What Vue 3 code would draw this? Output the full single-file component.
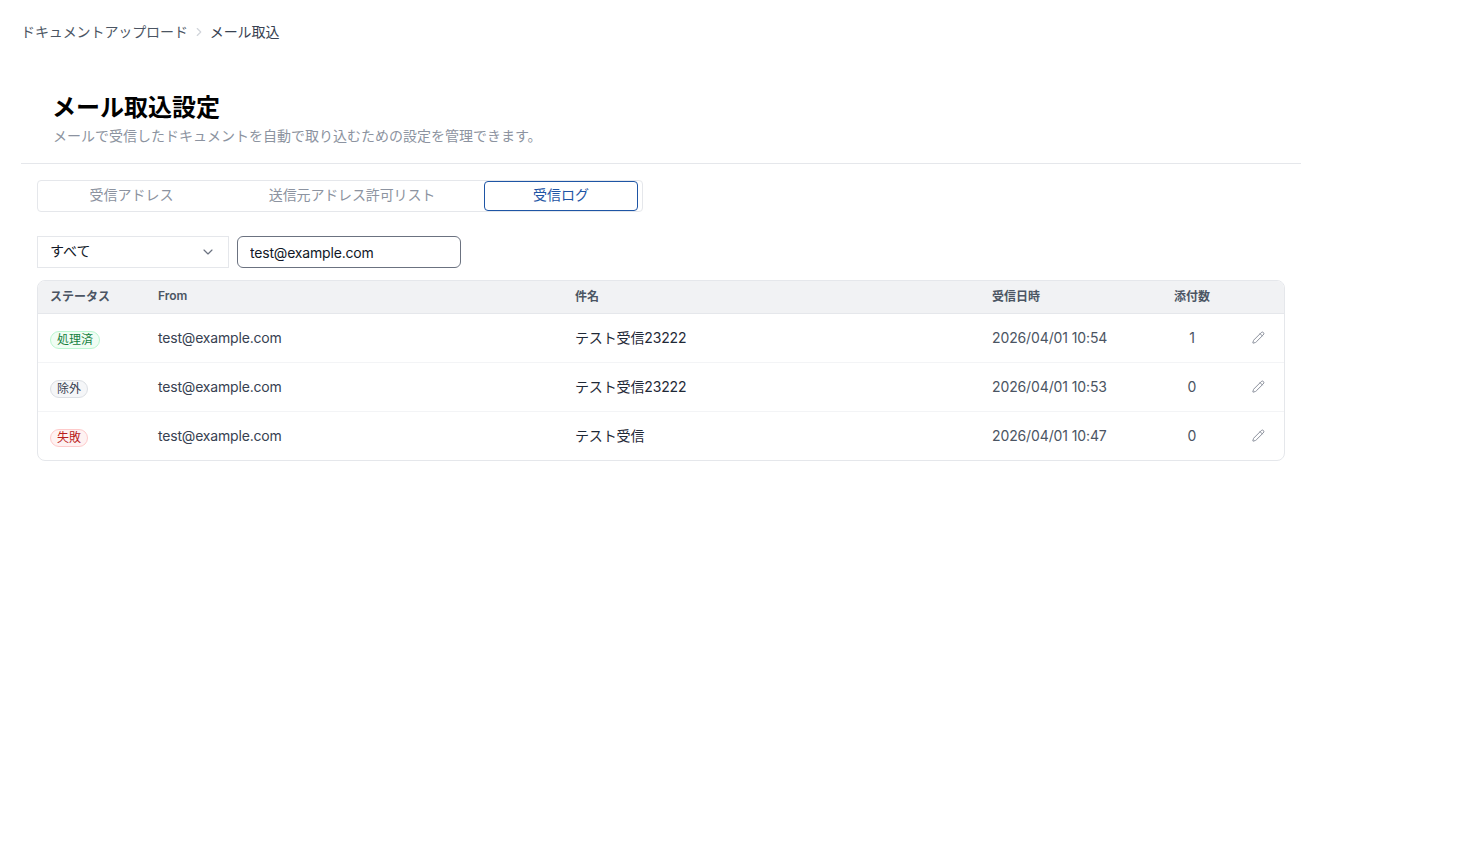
<script setup>
const logs = [
  { status: '処理済', type: 'done', from: 'test@example.com', subject: 'テスト受信23222', date: '2026/04/01 10:54', count: 1 },
  { status: '除外', type: 'skip', from: 'test@example.com', subject: 'テスト受信23222', date: '2026/04/01 10:53', count: 0 },
  { status: '失敗', type: 'fail', from: 'test@example.com', subject: 'テスト受信', date: '2026/04/01 10:47', count: 0 }
];
</script>

<template>
  <div class="page">
    <nav class="breadcrumb">
      <span class="crumb">ドキュメントアップロード</span>
      <svg class="crumb-sep" width="14" height="14" viewBox="0 0 24 24" fill="none" stroke="currentColor" stroke-width="2" stroke-linecap="round" stroke-linejoin="round">
        <path d="m9 18 6-6-6-6" />
      </svg>
      <span class="crumb current">メール取込</span>
    </nav>

    <header class="head">
      <h1>メール取込設定</h1>
      <p>メールで受信したドキュメントを自動で取り込むための設定を管理できます。</p>
    </header>

    <div class="body">
      <div class="tabs">
        <button class="tab tab-a">受信アドレス</button>
        <button class="tab tab-b">送信元アドレス許可リスト</button>
        <button class="tab tab-c active">受信ログ</button>
      </div>

      <div class="filters">
        <div class="select">
          <span>すべて</span>
          <svg width="16" height="16" viewBox="0 0 24 24" fill="none" stroke="currentColor" stroke-width="1.75" stroke-linecap="round" stroke-linejoin="round">
            <path d="m6 9 6 6 6-6" />
          </svg>
        </div>
        <input class="search" type="text" value="test@example.com" />
      </div>

      <div class="table-wrap">
        <table>
          <thead>
            <tr>
              <th class="c-status">ステータス</th>
              <th class="c-from">From</th>
              <th class="c-subject">件名</th>
              <th class="c-date">受信日時</th>
              <th class="c-count">添付数</th>
              <th class="c-edit"></th>
            </tr>
          </thead>
          <tbody>
            <tr v-for="(row, index) in logs" :key="index">
              <td><span class="badge" :class="row.type">{{ row.status }}</span></td>
              <td class="from">{{ row.from }}</td>
              <td class="subject">{{ row.subject }}</td>
              <td class="date">{{ row.date }}</td>
              <td class="count">{{ row.count }}</td>
              <td class="edit">
                <svg width="13" height="13" viewBox="0 0 24 24" fill="none" stroke="currentColor" stroke-width="1.75" stroke-linecap="round" stroke-linejoin="round">
                  <path d="M21.17 6.81a2.83 2.83 0 0 0-4-4L3.34 16.67a2 2 0 0 0-.5.83l-1.32 4.35a.5.5 0 0 0 .62.62l4.35-1.32a2 2 0 0 0 .83-.5z" />
                  <path d="m15 5 4 4" />
                </svg>
              </td>
            </tr>
          </tbody>
        </table>
      </div>
    </div>
  </div>
</template>

<style>
body {
  background: #fff;
}
</style>

<style scoped>
.page {
  width: 1280px;
  margin-left: 21px;
  font-family: Inter, "Noto Sans CJK JP", sans-serif;
  color: #111827;
}

.breadcrumb {
  display: flex;
  align-items: center;
  gap: 4px;
  height: 20px;
  padding-top: 22px;
  font-size: 14px;
  line-height: 20px;
}

.crumb {
  color: #4b5563;
  letter-spacing: -0.1px;
}

.crumb.current {
  color: #374151;
}

.crumb-sep {
  color: #d1d5db;
}

.head {
  margin-top: 50px;
  padding: 0 0 17px 32px;
  border-bottom: 1px solid #e5e7eb;
}

.head h1 {
  margin: 0 0 0 -1px;
  font-size: 24px;
  line-height: 32px;
  font-weight: 700;
  color: #000;
}

.head p {
  margin: 2px 0 0;
  font-size: 14px;
  line-height: 20px;
  color: #8c93a0;
}

.body {
  padding: 16px 16px 0;
}

.tabs {
  display: flex;
  align-items: center;
  width: 606px;
  height: 32px;
  box-sizing: border-box;
  padding: 0 3px 0 0;
  border: 1px solid #e5e7eb;
  border-radius: 4px;
}

.tab {
  height: 30px;
  padding: 0 0 4px;
  border: 1px solid transparent;
  border-radius: 4px;
  background: none;
  font-family: inherit;
  font-size: 14px;
  color: #8c93a0;
}

.tab-a {
  width: 187px;
}

.tab-b {
  width: 259px;
  padding-right: 5px;
  letter-spacing: -0.13px;
}

.tab-c {
  width: 154px;
}

.tab.active {
  border-color: #1e55a5;
  color: #1e55a5;
}

.filters {
  display: flex;
  gap: 8px;
  margin-top: 24px;
}

.select {
  display: flex;
  align-items: center;
  justify-content: space-between;
  box-sizing: border-box;
  width: 192px;
  height: 32px;
  padding: 0 12px;
  border: 1px solid #e5e7eb;
  font-size: 14px;
  color: #111827;
}

.select span {
  margin-bottom: 4px;
}

.select svg {
  color: #6b7280;
}

.search {
  box-sizing: border-box;
  width: 224px;
  height: 32px;
  padding: 0 12px;
  border: 1px solid #6b7280;
  border-radius: 6px;
  outline: none;
  font-family: inherit;
  font-size: 14px;
  letter-spacing: -0.18px;
  color: #111827;
}

.table-wrap {
  width: 1248px;
  box-sizing: border-box;
  margin-top: 12px;
  border: 1px solid #e5e7eb;
  border-radius: 8px;
  overflow: hidden;
}

table {
  width: 100%;
  border-collapse: collapse;
  table-layout: fixed;
}

th,
td {
  box-sizing: border-box;
}

th {
  height: 32px;
  padding: 0 12px 2px;
  background: #f1f2f4;
  border-bottom: 1px solid #e5e7eb;
  text-align: left;
  font-size: 12px;
  font-weight: 600;
  color: #4b5563;
}

td {
  height: 49px;
  padding: 0 12px 1px;
  border-bottom: 1px solid #f3f4f6;
  font-size: 14px;
}

tbody tr:last-child td {
  border-bottom: none;
}

.c-status {
  width: 108px;
}

.c-from,
.c-subject {
  width: 417px;
}

.c-date {
  width: 182px;
}

.c-count {
  width: 60px;
  padding: 0 0 2px;
  text-align: center;
}

.from {
  color: #374151;
  letter-spacing: -0.18px;
}

.subject {
  color: #1f2937;
  letter-spacing: -0.15px;
}

.date {
  color: #4b5563;
  letter-spacing: -0.12px;
}

td.count {
  padding: 0 0 1px;
  text-align: center;
  color: #4b5563;
}

.edit {
  color: #858b97;
}

.edit svg {
  display: block;
  margin: 0 7px 0 auto;
}

.badge {
  position: relative;
  top: 2px;
  display: inline-block;
  padding: 0 6px;
  border: 1px solid;
  border-radius: 999px;
  font-size: 12px;
  line-height: 16px;
}

.badge.done {
  background: #f0fdf4;
  border-color: #bbf7d0;
  color: #15803d;
}

.badge.skip {
  background: #f5f6f8;
  border-color: #dcdfe4;
  color: #374151;
}

.badge.fail {
  background: #fef2f2;
  border-color: #fecaca;
  color: #b91c1c;
}
</style>
